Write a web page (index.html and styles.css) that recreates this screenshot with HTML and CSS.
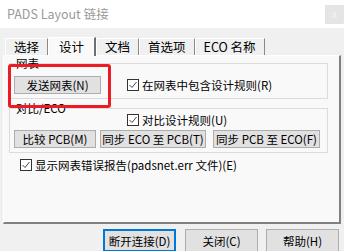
FILE: index.html
```html
<!DOCTYPE html>
<html>
<head>
<meta charset="utf-8">
<link rel="stylesheet" href="styles.css">
</head>
<body>
<div class="titlebar">
  <span class="title">PADS Layout 链接</span>
  <span class="close">x</span>
</div>
<div class="tabs">
  <div class="tab">选择</div>
  <div class="tab active">设计</div>
  <div class="tab">文档</div>
  <div class="tab">首选项</div>
  <div class="tab">ECO 名称</div>
</div>
<div class="panel">
  <fieldset class="group g1">
    <legend>网表</legend>
    <div class="row">
      <button class="btn send">发送网表(N)</button>
      <label class="check"><svg width="12" height="12" viewBox="0 0 12 12"><rect x="0.5" y="0.5" width="11" height="11" fill="#fff" stroke="#333"/><polyline points="2.5,6 5,8.5 9.5,3" fill="none" stroke="#444" stroke-width="1"/></svg>在网表中包含设计规则(R)</label>
    </div>
  </fieldset>
  <fieldset class="group g2">
    <legend>对比/ECO</legend>
    <label class="check c2"><svg width="12" height="12" viewBox="0 0 12 12"><rect x="0.5" y="0.5" width="11" height="11" fill="#fff" stroke="#333"/><polyline points="2.5,6 5,8.5 9.5,3" fill="none" stroke="#444" stroke-width="1"/></svg>对比设计规则(U)</label>
    <div class="btnrow">
      <button class="btn b1">比较 PCB(M)</button>
      <button class="btn b2">同步 ECO 至 PCB(T)</button>
      <button class="btn b3">同步 PCB 至 ECO(F)</button>
    </div>
  </fieldset>
  <label class="check c3"><svg width="12" height="12" viewBox="0 0 12 12"><rect x="0.5" y="0.5" width="11" height="11" fill="#fff" stroke="#333"/><polyline points="2.5,6 5,8.5 9.5,3" fill="none" stroke="#444" stroke-width="1"/></svg>显示网表错误报告(padsnet.err 文件)(E)</label>
  <div class="highlight"></div>
</div>
<div class="footer">
  <button class="btn fbtn default">断开连接(D)</button>
  <button class="btn fbtn">关闭(C)</button>
  <button class="btn fbtn last">帮助(H)</button>
</div>
</body>
</html>
```
FILE: styles.css
```css
* { box-sizing: border-box; }
body {
  margin: 0;
  width: 344px;
  height: 251px;
  overflow: hidden;
  background: #f0f0f0;
  font-family: "Noto Sans CJK SC", "Noto Sans", sans-serif;
  font-size: 11.5px;
  color: #000;
}
.titlebar {
  height: 28px;
  background: #fff;
  display: flex;
  align-items: flex-start;
  padding-left: 7px;
}
.title {
  flex: 1;
  color: #9a9a9a;
  font-size: 12.5px;
  line-height: 28px;
}
.close {
  width: 19px;
  height: 19px;
  margin-top: 5px;
  background: #e5e5e5;
  color: #f4f4f4;
  font-size: 10px;
  display: flex;
  align-items: center;
  justify-content: center;
  font-family: "DejaVu Sans", sans-serif;
}
.tabs {
  height: 27px;
  display: flex;
  align-items: flex-end;
  padding-left: 5px;
}
.tab {
  height: 17px;
  line-height: 16px;
  padding: 0 8px;
  font-size: 12.5px;
  border-left: 1px solid #fff;
  border-top: 1px solid #fff;
  border-right: 1px solid #8a8a8a;
  background: #f0f0f0;
  position: relative;
}
.tab.active {
  height: 19px;
  line-height: 17px;
  padding: 0 10px;
  background: #f9f9f9;
  border-right: 2px solid #6f6f6f;
  margin-bottom: -1px;
  z-index: 1;
}
.panel {
  position: relative;
  margin: 0 3px;
  height: 169px;
  background: #f9f9f9;
  border-left: 1px solid #fff;
  border-top: 1px solid #fff;
  border-right: 2px solid #808080;
  border-bottom: 2px solid #808080;
  padding: 0 0 0 5px;
}
.group {
  margin: 0;
  width: 319px;
  border: 1px solid #dcdcdc;
  padding: 0;
}
.group legend {
  padding: 0;
  margin-left: 6px;
  line-height: 14px;
  height: 14px;
}
.g1 { height: 43px; }
.g1 .row {
  display: flex;
  align-items: center;
  padding: 6px 0 0 4px;
}
.btn {
  font-family: inherit;
  font-size: 11.5px;
  color: #000;
  background: #e1e1e1;
  border: 1px solid #adadad;
  padding: 0;
  height: 18px;
  line-height: 16px;
  margin: 0;
}
.send { width: 87px; }
.check {
  display: flex;
  align-items: center;
  gap: 3px;
  line-height: 14px;
}
.g1 .check { margin-left: 26px; }
.g2 {
  margin-top: 2px;
  height: 52px;
}
.c2 {
  margin: -2px 0 0 117px;
}
.btnrow {
  display: flex;
  gap: 4px;
  padding: 3px 0 0 4px;
}
.b1 { width: 82px; }
.b2 { width: 106px; margin-right: 3px; }
.b3 { width: 107px; }
.c3 {
  margin: 5px 0 0 11px;
}
.highlight {
  position: absolute;
  left: 4px;
  top: 8px;
  width: 103px;
  height: 44px;
  border: 3px solid #ec1c24;
  border-radius: 3px;
}
.footer {
  display: flex;
  justify-content: flex-end;
  padding: 5px 5px 0 0;
}
.fbtn {
  width: 73px;
  height: 23px;
  margin-left: 9px;
}
.fbtn.default {
  border: 2px solid #0078d7;
}
.fbtn.last { margin-left: 8px; }
```
